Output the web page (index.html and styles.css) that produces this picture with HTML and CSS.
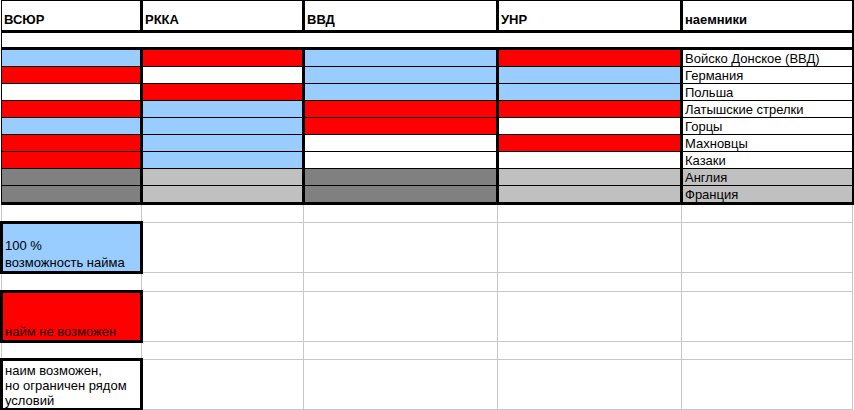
FILE: index.html
```html
<!DOCTYPE html>
<html lang="ru">
<head>
    <meta charset="UTF-8">
    <title>Наемники</title>
    <link rel="stylesheet" href="styles.css">
</head>
<body>
    <table class="sheet">
        <colgroup>
            <col class="c1"><col class="c2"><col class="c3"><col class="c4"><col class="c5">
        </colgroup>
        <tr class="head">
            <th>ВСЮР</th><th>РККА</th><th>ВВД</th><th>УНР</th><th class="name">наемники</th>
        </tr>
        <tr class="gap"><td colspan="5"></td></tr>
        <tr class="row">
            <td class="blue"></td><td class="red"></td><td class="blue"></td><td class="red"></td><td class="name">Войско Донское (ВВД)</td>
        </tr>
        <tr class="row">
            <td class="red"></td><td></td><td class="blue"></td><td class="blue"></td><td class="name">Германия</td>
        </tr>
        <tr class="row">
            <td></td><td class="red"></td><td class="blue"></td><td class="blue"></td><td class="name">Польша</td>
        </tr>
        <tr class="row">
            <td class="red"></td><td class="blue"></td><td class="red"></td><td class="red"></td><td class="name">Латышские стрелки</td>
        </tr>
        <tr class="row">
            <td class="blue"></td><td class="blue"></td><td class="red"></td><td></td><td class="name">Горцы</td>
        </tr>
        <tr class="row">
            <td class="red"></td><td class="blue"></td><td></td><td class="red"></td><td class="name">Махновцы</td>
        </tr>
        <tr class="row">
            <td class="red"></td><td class="blue"></td><td></td><td></td><td class="name">Казаки</td>
        </tr>
        <tr class="row">
            <td class="dark"></td><td class="light"></td><td class="dark"></td><td class="light"></td><td class="name light">Англия</td>
        </tr>
        <tr class="row last">
            <td class="dark"></td><td class="light"></td><td class="dark"></td><td class="light"></td><td class="name light">Франция</td>
        </tr>
        <tr class="grid"><td></td><td></td><td></td><td></td><td></td></tr>
        <tr class="legend">
            <td class="key blue">100 %<br>возможность найма</td><td></td><td></td><td></td><td></td>
        </tr>
        <tr class="grid"><td></td><td></td><td></td><td></td><td></td></tr>
        <tr class="legend">
            <td class="key red">найм не возможен</td><td></td><td></td><td></td><td></td>
        </tr>
        <tr class="grid short"><td></td><td></td><td></td><td></td><td></td></tr>
        <tr class="legend">
            <td class="key wrap">наим возможен,<br>но ограничен рядом<br>условий</td><td></td><td></td><td></td><td></td>
        </tr>
    </table>
</body>
</html>
```

FILE: styles.css
```css
body {
    margin: 0;
    background-color: #fff;
    font-family: 'Liberation Sans', Arial, sans-serif;
    font-size: 13px;
    color: #000;
}
.sheet {
    border-collapse: collapse;
    table-layout: fixed;
    width: 851px;
}
.c1 { width: 140px; }
.c2 { width: 162px; }
.c3 { width: 194px; }
.c4 { width: 184px; }
.c5 { width: 171px; }
.sheet td, .sheet th {
    border: 1px solid #c8c8c8;
    padding: 0 2px;
    vertical-align: bottom;
    text-align: left;
    line-height: 15px;
    white-space: nowrap;
    overflow: hidden;
}
.head th {
    height: 26px;
    padding-bottom: 3px;
    font-weight: bold;
    border: 1px solid #000;
    border-right: 3px solid #000;
    border-bottom: 3px solid #000;
}
.head th.name {
    border-right: 2px solid #000;
}
.gap td {
    height: 14px;
    border: 1px solid #000;
    border-right: 2px solid #000;
    border-bottom: 3px solid #000;
}
.row td {
    height: 16px;
    border: 1px solid #000;
    border-right: 3px solid #000;
}
.row td.name {
    border-right: 2px solid #000;
}
.row.last td {
    border-bottom: 3px solid #000;
}
.grid td {
    height: 16px;
}
.grid.short td {
    height: 15px;
}
.legend td {
    height: 47px;
}
.legend td.key {
    border: 3px solid #000;
    white-space: normal;
    line-height: 17px;
}
.legend td.wrap {
    line-height: 15px;
    padding-top: 0;
}
.blue { background-color: #99ccff; }
.red { background-color: #ff0000; }
.dark { background-color: #808080; }
.light { background-color: #c0c0c0; }
.key.red { color: #1a0000; }
```
